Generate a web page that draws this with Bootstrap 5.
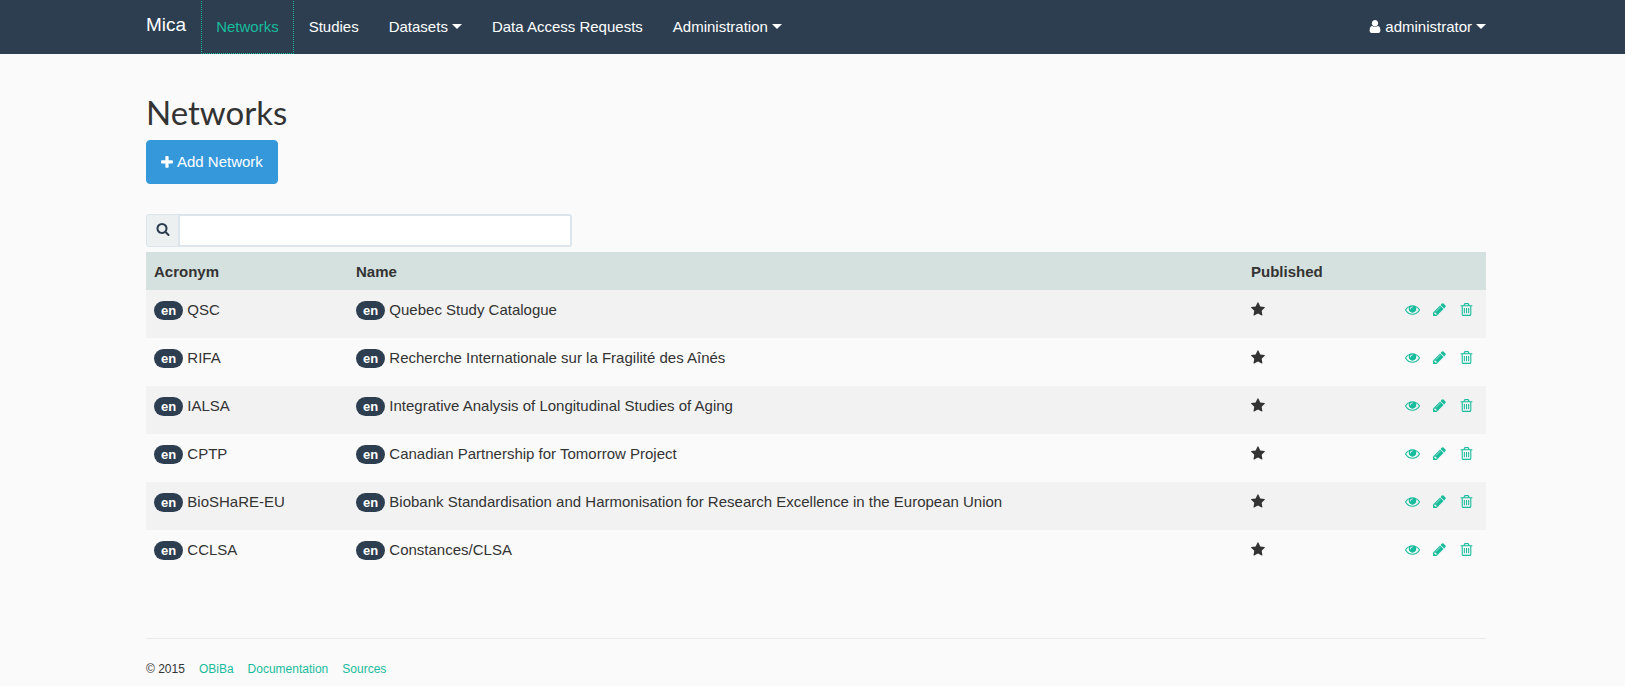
<!DOCTYPE html>
<html lang="en">
<head>
<meta charset="utf-8">
<meta name="viewport" content="width=device-width, initial-scale=1">
<title>Mica - Networks</title>
<link href="https://cdn.jsdelivr.net/npm/bootstrap@5.3.0/dist/css/bootstrap.min.css" rel="stylesheet">
<style>
  body { font-family: "Liberation Sans", Arial, sans-serif; font-size: 15px; line-height: 21px; color: #333; background: #fafafa; }
  a { color: #18bc9c; text-decoration: none; }
  .page-gutter { padding-left: 146px; padding-right: 139px; }
  .ico { width: 15px; height: 15px; fill: currentColor; display: inline-block; flex: none; }
  .ico-narrow { width: 12px; }
  .mica-bar { background: #2c3e50; padding-top: 0; padding-bottom: 0; min-height: 54px; }
  .mica-bar .navbar-brand { color: #fff; font-size: 19px; line-height: 21px; padding: 13px 0 19px; margin-right: 15px; }
  .mica-bar .navbar-nav .nav-link { color: #fff; padding: 15px 14px 16px; line-height: 21px; border: 1px dotted transparent; border-top: 0; }
  .mica-bar .navbar-nav .nav-link.active { color: #18bc9c; border-color: #18bc9c; }
  .mica-bar .navbar-nav .user-link { padding-right: 0; border-right: 0; }
  .user-link .ico { vertical-align: -2px; }
  .dropdown-toggle::after { border-top: 5px solid; border-right: 5px solid transparent; border-left: 5px solid transparent; margin-left: 4px; vertical-align: 3px; }
  h2 { font-family: Lato, sans-serif; font-size: 33px; font-weight: 400; line-height: 36px; margin: 40px 0 10px; }
  .btn-add { background: #3498db; color: #fff; font-size: 15px; line-height: 22px; padding: 10px 14px; border-radius: 4px; border-color: #3498db; }
  .search-box { width: 426px; max-width: 100%; margin: 30px 0 5px; }
  .search-box .input-group-text { width: 33px; padding: 0 0 3px; justify-content: center; background: #ecf0f1; border: 1px solid #dce4ec; border-radius: 3px 0 0 3px; color: #2c3e50; }
  .search-box .ico { width: 14px; height: 14px; }
  .search-box .form-control { height: 33px; padding: 4px 9px; border: 2px solid #dce4ec; border-radius: 0 3px 3px 0; font-size: 13px; }
  .net-table { --bs-table-bg: transparent; margin: 0; color: #333; table-layout: fixed; }
  .net-table > :not(caption) > * > * { border: 0; padding: 9px 8px 18px; vertical-align: top; color: #333; }
  .net-table > thead > tr > th { background: #d5e1de; padding: 9px 8px 8px; }
  .net-table > tbody > tr:nth-child(odd) > td { background: #f2f2f2; box-shadow: none; }
  .net-table .ico { vertical-align: -2px; }
  .net-table > tbody > tr > .row-actions { padding: 12px 12px 0 0; }
  .row-actions > div { gap: 12px; }
  .row-actions a { display: flex; }
  .col-acronym { width: 202px; }
  .col-published { width: 138px; }
  .col-actions { width: 105px; }
  .lang-tag { display: inline-block; background: #2c3e50; color: #fff; font-size: 13px; font-weight: 700; line-height: 19px; border-radius: 10px; padding: 0 7px; }
  .page-foot { border-top: 1px solid #eaeaea; margin-top: 60px; padding-top: 20px; font-size: 12px; gap: 14px; }
</style>
</head>
<body>
<svg class="d-none" aria-hidden="true">
  <symbol id="i-eye" viewBox="0 0 1792 1792"><path d="M1664 960q-152-236-381-353 61 104 61 225 0 185-131.500 316.500t-316.500 131.500-316.500-131.500-131.500-316.500q0-121 61-225-229 117-381 353 133 205 333.500 326.500t434.500 121.500 434.500-121.500 333.500-326.500zm-720-384q0-20-14-34t-34-14q-125 0-214.500 89.500t-89.500 214.500q0 20 14 34t34 14 34-14 14-34q0-86 61-147t147-61q20 0 34-14t14-34zm848 384q0 34-20 69-140 230-376.500 368.500t-499.500 138.500-499.500-139-376.500-368q-20-35-20-69t20-69q140-229 376.500-368t499.500-139 499.500 139 376.500 368q20 35 20 69z"/></symbol>
  <symbol id="i-pencil" viewBox="0 0 1792 1792"><path d="M491 1536l91-91-235-235-91 91v107h128v128h107zm523-928q0-22-22-22-10 0-17 7l-542 542q-7 7-7 17 0 22 22 22 10 0 17-7l542-542q7-7 7-17zm-54-192l416 416-832 832h-416v-416zm683 96q0 53-37 90l-166 166-416-416 166-165q36-38 90-38 53 0 91 38l235 234q37 39 37 91z"/></symbol>
  <symbol id="i-trash" viewBox="0 0 1792 1792"><path d="M704 736v576q0 14-9 23t-23 9h-64q-14 0-23-9t-9-23v-576q0-14 9-23t23-9h64q14 0 23 9t9 23zm256 0v576q0 14-9 23t-23 9h-64q-14 0-23-9t-9-23v-576q0-14 9-23t23-9h64q14 0 23 9t9 23zm256 0v576q0 14-9 23t-23 9h-64q-14 0-23-9t-9-23v-576q0-14 9-23t23-9h64q14 0 23 9t9 23zm128 724v-948h-896v948q0 22 7 40.500t14.500 27 10.500 8.500h832q3 0 10.500-8.500t14.500-27 7-40.500zm-672-1076h448l-48-117q-7-9-17-11h-317q-10 2-17 11zm928 32v64q0 14-9 23t-23 9h-96v948q0 83-47 143.500t-113 60.500h-832q-66 0-113-58.500t-47-141.500v-952h-96q-14 0-23-9t-9-23v-64q0-14 9-23t23-9h309l70-167q15-37 54-63t79-26h320q40 0 79 26t54 63l70 167h309q14 0 23 9t9 23z"/></symbol>
  <symbol id="i-star" viewBox="64 0 1792 1792"><path d="M1728 647q0 22-26 48l-363 354 86 500q1 7 1 20 0 21-10.500 35.500t-30.500 14.500q-19 0-40-12l-449-236-449 236q-22 12-40 12-21 0-31.500-14.500t-10.500-35.500q0-6 2-20l86-500-364-354q-25-27-25-48 0-37 56-46l502-73 225-455q19-41 49-41t49 41l225 455 502 73q56 9 56 46z"/></symbol>
  <symbol id="i-user" viewBox="192 0 1408 1792"><path d="M1536 1399q0 109-62.500 187t-150.500 78h-854q-88 0-150.500-78t-62.500-187q0-85 8.500-160.500t31.500-152 58.500-131 94-89 134.500-34.500q131 128 313 128t313-128q76 0 134.500 34.500t94 89 58.500 131 31.500 152 8.500 160.500zm-256-887q0 159-112.500 271.500t-271.500 112.500-271.500-112.500-112.500-271.500 112.500-271.500 271.500-112.500 271.500 112.500 112.500 271.500z"/></symbol>
  <symbol id="i-plus" viewBox="192 0 1408 1792"><path d="M1600 736v192q0 40-28 68t-68 28h-416v416q0 40-28 68t-68 28h-192q-40 0-68-28t-28-68v-416h-416q-40 0-68-28t-28-68v-192q0-40 28-68t68-28h416v-416q0-40 28-68t68-28h192q40 0 68 28t28 68v416h416q40 0 68 28t28 68z"/></symbol>
  <symbol id="i-search" viewBox="0 0 1792 1792"><path d="M1216 832q0-185-131.500-316.500t-316.500-131.500-316.500 131.500-131.500 316.500 131.500 316.500 316.500 131.500 316.500-131.500 131.500-316.500zm512 832q0 52-38 90t-90 38q-54 0-90-38l-343-342q-179 124-399 124-143 0-273.500-55.500t-225-150-150-225-55.500-273.500 55.500-273.500 150-225 225-150 273.500-55.500 273.500 55.500 225 150 150 225 55.500 273.500q0 220-124 399l343 343q37 37 37 90z"/></symbol>
</svg>

<nav class="navbar navbar-expand mica-bar">
  <div class="container-fluid page-gutter align-items-start">
    <a class="navbar-brand" href="#">Mica</a>
    <ul class="navbar-nav me-auto">
      <li class="nav-item"><a class="nav-link active" href="#" aria-current="page">Networks</a></li>
      <li class="nav-item"><a class="nav-link" href="#">Studies</a></li>
      <li class="nav-item dropdown"><a class="nav-link dropdown-toggle" href="#" role="button">Datasets</a></li>
      <li class="nav-item"><a class="nav-link" href="#">Data Access Requests</a></li>
      <li class="nav-item dropdown"><a class="nav-link dropdown-toggle" href="#" role="button">Administration</a></li>
    </ul>
    <ul class="navbar-nav">
      <li class="nav-item dropdown"><a class="nav-link dropdown-toggle user-link" href="#" role="button"><svg class="ico ico-narrow"><use href="#i-user"/></svg> administrator</a></li>
    </ul>
  </div>
</nav>

<main class="container-fluid page-gutter">
  <h2>Networks</h2>
  <button type="button" class="btn btn-add d-inline-flex align-items-center gap-1"><svg class="ico ico-narrow"><use href="#i-plus"/></svg>Add Network</button>
  <div class="input-group flex-nowrap search-box">
    <label class="input-group-text" for="search" aria-label="Search"><svg class="ico"><use href="#i-search"/></svg></label>
    <input type="text" class="form-control" id="search">
  </div>
  <table class="table net-table">
    <colgroup><col class="col-acronym"><col><col class="col-published"><col class="col-actions"></colgroup>
    <thead>
      <tr><th scope="col">Acronym</th><th scope="col">Name</th><th scope="col">Published</th><th scope="col"></th></tr>
    </thead>
    <tbody>
      <tr>
        <td><span class="lang-tag">en</span> QSC</td>
        <td><span class="lang-tag">en</span> Quebec Study Catalogue</td>
        <td><svg class="ico"><use href="#i-star"/></svg></td>
        <td class="row-actions"><div class="d-flex justify-content-end"><a href="#" aria-label="View"><svg class="ico"><use href="#i-eye"/></svg></a><a href="#" aria-label="Edit"><svg class="ico"><use href="#i-pencil"/></svg></a><a href="#" aria-label="Delete"><svg class="ico"><use href="#i-trash"/></svg></a></div></td>
      </tr>
      <tr>
        <td><span class="lang-tag">en</span> RIFA</td>
        <td><span class="lang-tag">en</span> Recherche Internationale sur la Fragilité des Aînés</td>
        <td><svg class="ico"><use href="#i-star"/></svg></td>
        <td class="row-actions"><div class="d-flex justify-content-end"><a href="#" aria-label="View"><svg class="ico"><use href="#i-eye"/></svg></a><a href="#" aria-label="Edit"><svg class="ico"><use href="#i-pencil"/></svg></a><a href="#" aria-label="Delete"><svg class="ico"><use href="#i-trash"/></svg></a></div></td>
      </tr>
      <tr>
        <td><span class="lang-tag">en</span> IALSA</td>
        <td><span class="lang-tag">en</span> Integrative Analysis of Longitudinal Studies of Aging</td>
        <td><svg class="ico"><use href="#i-star"/></svg></td>
        <td class="row-actions"><div class="d-flex justify-content-end"><a href="#" aria-label="View"><svg class="ico"><use href="#i-eye"/></svg></a><a href="#" aria-label="Edit"><svg class="ico"><use href="#i-pencil"/></svg></a><a href="#" aria-label="Delete"><svg class="ico"><use href="#i-trash"/></svg></a></div></td>
      </tr>
      <tr>
        <td><span class="lang-tag">en</span> CPTP</td>
        <td><span class="lang-tag">en</span> Canadian Partnership for Tomorrow Project</td>
        <td><svg class="ico"><use href="#i-star"/></svg></td>
        <td class="row-actions"><div class="d-flex justify-content-end"><a href="#" aria-label="View"><svg class="ico"><use href="#i-eye"/></svg></a><a href="#" aria-label="Edit"><svg class="ico"><use href="#i-pencil"/></svg></a><a href="#" aria-label="Delete"><svg class="ico"><use href="#i-trash"/></svg></a></div></td>
      </tr>
      <tr>
        <td><span class="lang-tag">en</span> BioSHaRE-EU</td>
        <td><span class="lang-tag">en</span> Biobank Standardisation and Harmonisation for Research Excellence in the European Union</td>
        <td><svg class="ico"><use href="#i-star"/></svg></td>
        <td class="row-actions"><div class="d-flex justify-content-end"><a href="#" aria-label="View"><svg class="ico"><use href="#i-eye"/></svg></a><a href="#" aria-label="Edit"><svg class="ico"><use href="#i-pencil"/></svg></a><a href="#" aria-label="Delete"><svg class="ico"><use href="#i-trash"/></svg></a></div></td>
      </tr>
      <tr>
        <td><span class="lang-tag">en</span> CCLSA</td>
        <td><span class="lang-tag">en</span> Constances/CLSA</td>
        <td><svg class="ico"><use href="#i-star"/></svg></td>
        <td class="row-actions"><div class="d-flex justify-content-end"><a href="#" aria-label="View"><svg class="ico"><use href="#i-eye"/></svg></a><a href="#" aria-label="Edit"><svg class="ico"><use href="#i-pencil"/></svg></a><a href="#" aria-label="Delete"><svg class="ico"><use href="#i-trash"/></svg></a></div></td>
      </tr>
    </tbody>
  </table>
  <footer class="page-foot d-flex">
    <span>© 2015</span><a href="#">OBiBa</a><a href="#">Documentation</a><a href="#">Sources</a>
  </footer>
</main>
<script src="https://cdn.jsdelivr.net/npm/bootstrap@5.3.0/dist/js/bootstrap.bundle.min.js"></script>
</body>
</html>
